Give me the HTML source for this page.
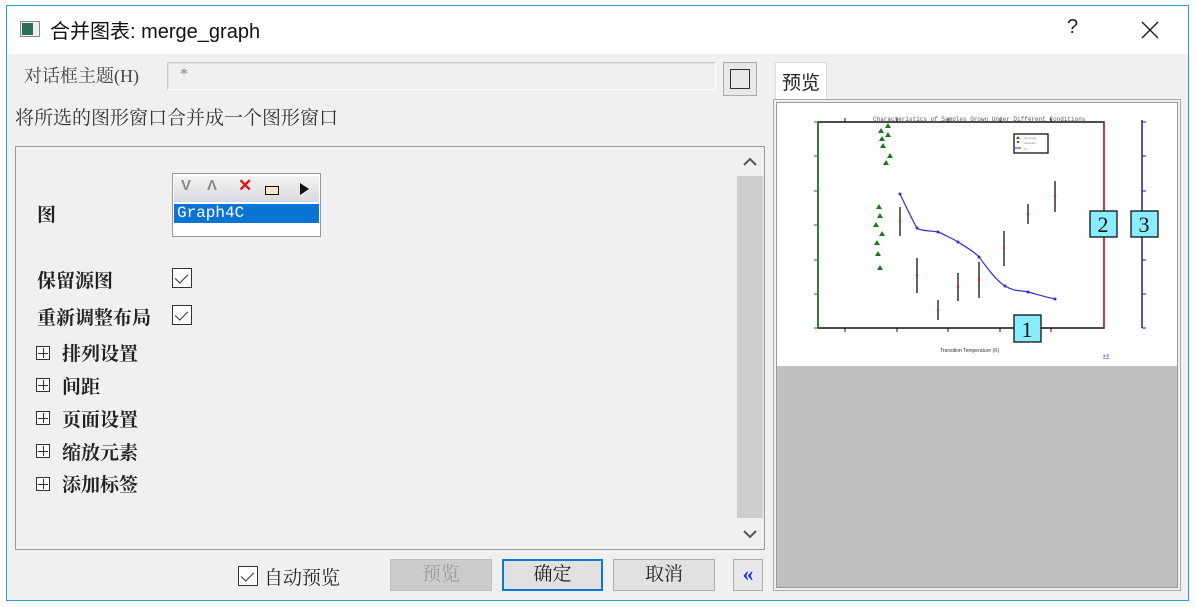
<!DOCTYPE html><html><head><meta charset="utf-8"><style>
*{margin:0;padding:0;box-sizing:border-box}
body{width:1196px;height:607px;background:#fff;position:relative;overflow:hidden;font-family:"Liberation Serif","Noto Serif CJK SC",serif;color:#222}
.a{position:absolute}
.win{left:6px;top:5px;width:1183px;height:596px;border:1px solid #2b9bd6;background:#f0f0f0}
.tb{left:0;top:0;width:1181px;height:48px;background:#fff}
.s{font-family:"Liberation Sans","Noto Sans CJK SC",sans-serif}
.cb{width:20px;height:20px;border:1px solid #333;background:#fff}
.cb:after{content:"";position:absolute;left:5px;top:2px;width:6px;height:11px;border-right:1.5px solid #333;border-bottom:1.5px solid #333;transform:rotate(45deg)}
.pl{width:14px;height:14px;border:1px solid #333;background:#fff}
.pl:before{content:"";position:absolute;left:6px;top:1px;width:1px;height:10px;background:#333}
.pl:after{content:"";position:absolute;top:6px;left:1px;height:1px;width:10px;background:#333}
.bt{font-size:19px;text-align:center;line-height:30px;height:32px;border:1px solid #adadad;background:#e1e1e1}
.b{font-weight:bold;font-size:19px}
</style></head><body>
<div class="a win">
<div class="a tb"></div>
</div>
<div class="a" style="left:20px;top:21px;width:20px;height:16px;border:1px solid #888;background:#eee"><div class="a" style="left:1px;top:1px;width:11px;height:12px;background:#2a6e5c"></div></div>
<div class="a s" style="left:50px;top:15px;font-size:20px;color:#111">合并图表: merge_graph</div>
<div class="a s" style="left:1067px;top:16px;font-size:20px">?</div>
<svg class="a" style="left:1140px;top:20px" width="20" height="20"><path d="M2 2L18 18M18 2L2 18" stroke="#222" stroke-width="1.5"/></svg>
<div class="a" style="left:24px;top:62px;font-size:18px;color:#444">对话框主题(H)</div>
<div class="a" style="left:167px;top:62px;width:549px;height:28px;border:1px solid #ccc;border-right-color:#fff;border-bottom-color:#fff;background:#f0f0f0;box-shadow:inset 1px 1px 0 #e0e0e0"><span class="a" style="left:12px;top:3px;color:#888;font-size:16px">*</span></div>
<div class="a" style="left:723px;top:62px;width:34px;height:34px;border:1px solid #aaa;background:#e8e8e8"><div class="a" style="left:6px;top:6px;width:20px;height:20px;border:1.5px solid #333"></div></div>
<div class="a" style="left:15px;top:103px;font-size:19px;color:#333">将所选的图形窗口合并成一个图形窗口</div>
<div class="a" style="left:15px;top:146px;width:750px;height:404px;border:1px solid #999;background:#f0f0f0"></div>
<div class="a" style="left:737px;top:176px;width:26px;height:342px;background:#cdcdcd"></div>
<svg class="a" style="left:742px;top:155px" width="16" height="14"><path d="M2 10L8 4L14 10" stroke="#555" stroke-width="2" fill="none"/></svg>
<svg class="a" style="left:742px;top:527px" width="16" height="14"><path d="M2 4L8 10L14 4" stroke="#555" stroke-width="2" fill="none"/></svg>
<div class="a b" style="left:37px;top:200px">图</div>
<div class="a" style="left:172px;top:173px;width:149px;height:64px;border:1px solid #999;background:#fff">
<div class="a" style="left:1px;top:2px;width:145px;height:26px;background:linear-gradient(#f4f4f4,#d8d8e0)"></div>
<span class="a s" style="left:8px;top:3px;color:#888;font-size:15px;font-weight:bold">V</span>
<span class="a s" style="left:34px;top:3px;color:#888;font-size:15px;font-weight:bold">Λ</span>
<span class="a s" style="left:65px;top:2px;color:#e01010;font-size:17px;font-weight:bold">✕</span>
<div class="a" style="left:92px;top:12px;width:14px;height:9px;border:1.5px solid #111;background:#f5e6c8"></div>
<svg class="a" style="left:125px;top:8px" width="12" height="14"><path d="M2 1L11 7L2 13Z" fill="#111"/></svg>
<div class="a" style="left:1px;top:30px;width:145px;height:19px;background:#0a74d4;color:#fff;font-family:'Liberation Mono',monospace;font-size:16px;line-height:19px;padding-left:3px">Graph4C</div>
</div>
<div class="a b" style="left:37px;top:266px">保留源图</div>
<div class="a cb" style="left:172px;top:268px"></div>
<div class="a b" style="left:37px;top:303px">重新调整布局</div>
<div class="a cb" style="left:172px;top:305px"></div>
<div class="a pl" style="left:36px;top:346px"></div><div class="a b" style="left:62px;top:339px">排列设置</div>
<div class="a pl" style="left:36px;top:378px"></div><div class="a b" style="left:62px;top:372px">间距</div>
<div class="a pl" style="left:36px;top:411px"></div><div class="a b" style="left:62px;top:405px">页面设置</div>
<div class="a pl" style="left:36px;top:444px"></div><div class="a b" style="left:62px;top:438px">缩放元素</div>
<div class="a pl" style="left:36px;top:477px"></div><div class="a b" style="left:62px;top:470px">添加标签</div>
<div class="a cb" style="left:238px;top:566px"></div>
<div class="a" style="left:264px;top:563px;font-size:19px">自动预览</div>
<div class="a bt" style="left:390px;top:559px;width:102px;background:#ccc;border-color:#bfbfbf;color:#999">预览</div>
<div class="a bt" style="left:502px;top:559px;width:101px;border:2px solid #0a78d7;line-height:28px">确定</div>
<div class="a bt" style="left:613px;top:559px;width:102px">取消</div>
<div class="a" style="left:733px;top:559px;width:30px;height:32px;border:1px solid #adadad;background:#e8e8e8;color:#1a3adf;font-weight:bold;font-size:22px;text-align:center;line-height:28px">«</div>
<div class="a" style="left:775px;top:62px;width:52px;height:38px;background:#fff;border:1px solid #ddd;border-bottom:none"></div>
<div class="a" style="left:782px;top:68px;font-size:19px;font-family:'Liberation Sans','Noto Sans CJK SC',sans-serif">预览</div>
<div class="a" style="left:773px;top:99px;width:408px;height:492px;border:1px solid #aaa;background:#f0f0f0"></div>
<div class="a" style="left:776px;top:102px;width:402px;height:486px;border:1px solid #999;background:#c0c0c0"></div>
<div class="a" style="left:777px;top:103px;width:400px;height:263px;background:#fff"></div>
<svg class="a" style="left:0;top:0" width="1196" height="607">
<rect x="818" y="122" width="286" height="206" fill="none" stroke="#111" stroke-width="1.5"/>
<line x1="818" y1="122" x2="818" y2="328" stroke="#1a7a1a" stroke-width="1.5"/>
<line x1="1104" y1="122" x2="1104" y2="328" stroke="#e02020" stroke-width="1.5"/>
<line x1="1142" y1="120" x2="1142" y2="328" stroke="#1a1aa0" stroke-width="1.5"/>
<g stroke="#111" stroke-width="1"><path d="M845 328v4M897 328v4M948 328v4M1000 328v4M1051 328v4M845 118v4M897 118v4M948 118v4M1000 118v4M1051 118v4"/></g>
<g stroke="#1a7a1a"><path d="M814 122h4M814 156h4M814 191h4M814 225h4M814 260h4M814 294h4M814 328h4"/></g>
<g stroke="#1a1aa0"><path d="M1142 122h4M1142 156h4M1142 191h4M1142 225h4M1142 260h4M1142 294h4M1142 328h4"/></g>
<g fill="#1a7a1a">
<path d="M888 123l3 5h-6z M881 128l3 5h-6z M888 132l3 5h-6z M882 136l3 5h-6z M883 143l3 5h-6z M890 153l3 5h-6z M886 160l3 5h-6z M879 204l3 5h-6z M880 213l3 5h-6z M876 222l3 5h-6z M882 231l3 5h-6z M877 240l3 5h-6z M878 251l3 5h-6z M880 265l3 5h-6z"/></g>
<path d="M900 194C910 215 915 225 917 228S935 231 938 232S955 240 958 242S975 252 979 257S995 280 1005 286S1020 290 1028 292S1045 297 1055 299" stroke="#3030d0" fill="none" stroke-width="1.2"/>
<g fill="#3030d0"><circle cx="900" cy="194" r="1.5"/><circle cx="917" cy="228" r="1.5"/><circle cx="938" cy="232" r="1.5"/><circle cx="958" cy="242" r="1.5"/><circle cx="979" cy="257" r="1.5"/><circle cx="1005" cy="286" r="1.5"/><circle cx="1028" cy="292" r="1.5"/><circle cx="1055" cy="299" r="1.5"/></g>
<g stroke="#111" stroke-width="1.3" fill="none">
<path d="M900 207v29M917 258v35M938 300v20M958 273v28M979 262v36M1004 231v35M1028 204v20M1055 181v31"/></g>
<g fill="#e02020"><rect x="899" y="220" width="2" height="2"/><rect x="916" y="274" width="2" height="2"/><rect x="937" y="309" width="2" height="2"/><rect x="957" y="286" width="2" height="2"/><rect x="978" y="279" width="2" height="2"/><rect x="1003" y="247" width="2" height="2"/><rect x="1027" y="213" width="2" height="2"/><rect x="1054" y="195" width="2" height="2"/></g>
<rect x="1014" y="134" width="34" height="19" fill="#fff" stroke="#111" stroke-width="1.3"/>
<path d="M1018 136l2 3h-4z" fill="#1a7a1a"/><rect x="1017" y="141" width="2" height="2" fill="#e02020"/><path d="M1015 148h6" stroke="#3030d0"/>
<g font-size="3" fill="#777"><text x="1024" y="139">As Grown</text><text x="1024" y="144">Annealed</text><text x="1024" y="150">Al</text></g>
<text x="873" y="121" font-size="6" fill="#555" font-family="Liberation Mono">Characteristics of Samples Grown Under Different Conditions</text>
<text x="940" y="352" font-size="5" fill="#333" font-family="Liberation Sans">Transition Temperature (K)</text>
<g fill="#8ef" stroke="#111" stroke-width="1.3"><rect x="1014" y="315" width="27" height="27"/><rect x="1090" y="211" width="27" height="26"/><rect x="1131" y="211" width="27" height="26"/></g>
<g font-family="Liberation Serif" font-size="22" fill="#111" text-anchor="middle"><text x="1027" y="337">1</text><text x="1103" y="232">2</text><text x="1144" y="232">3</text></g>
<text x="1103" y="357" font-size="5" fill="#22c" text-decoration="underline">a.b</text>
</svg>
</body></html>
